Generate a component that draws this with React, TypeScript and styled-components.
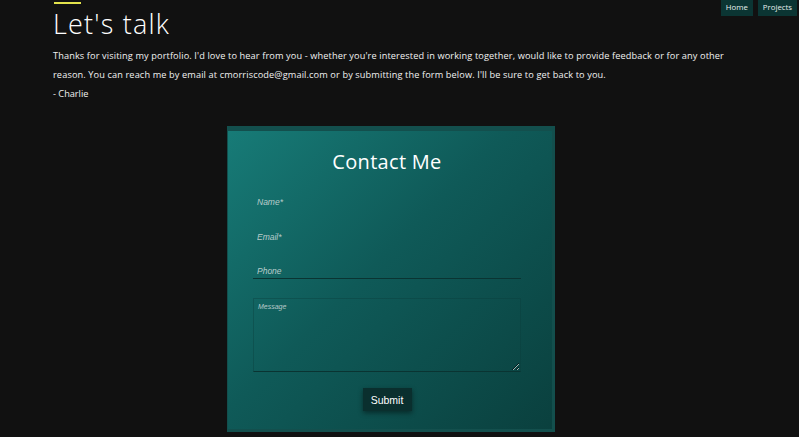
import React from "react";
import styled, { createGlobalStyle } from "styled-components";

const Global = createGlobalStyle`
  html, body { margin: 0; padding: 0; background: #111111; }
  body { font-family: "Open Sans", "Noto Sans", sans-serif; color: #ffffff; overflow: hidden; }
  * { box-sizing: border-box; }
`;

const Page = styled.div`
  position: relative;
  width: 799px;
  height: 437px;
  overflow: hidden;
  background: #111111;
`;

const Nav = styled.nav`
  position: absolute;
  top: 0;
  right: 2px;
  display: flex;
  gap: 5px;
`;

const NavButton = styled.a`
  display: block;
  height: 16px;
  padding: 0 5px;
  background: #0b3533;
  color: #e6f0ef;
  font-family: "Open Sans", sans-serif;
  font-size: 7.8px;
  line-height: 15px;
  text-decoration: none;
`;

const Intro = styled.section`
  padding: 2px 0 0 53px;
`;

const Accent = styled.div`
  width: 27px;
  height: 2px;
  margin-left: 1px;
  background: #e2e24c;
`;

const Title = styled.h1`
  margin: 2px 0 0 0;
  font-family: "Open Sans", sans-serif;
  font-weight: 300;
  font-size: 27px;
  line-height: 36px;
  letter-spacing: 1.2px;
`;

const Text = styled.p`
  margin: 5px 0 0 0;
  width: 678px;
  font-size: 9.2px;
  line-height: 18.5px;
  letter-spacing: 0.12px;
  color: #f2f2f2;
`;

const Signature = styled.p`
  margin: 0;
  font-size: 9.2px;
  line-height: 19px;
  color: #f2f2f2;
`;

const CardArea = styled.div`
  display: flex;
  padding: 23px 0 0 227px;
`;

const CardFrame = styled.div`
  width: 328px;
  height: 306px;
  padding: 5px 3px 3px 1px;
  background: #134f4d;
`;

const Card = styled.form`
  height: 100%;
  display: flex;
  flex-direction: column;
  align-items: center;
  padding: 0 31px 0 25px;
  background: linear-gradient(135deg, #177b77 0%, #0f5a58 45%, #0a403e 100%);
`;

const CardTitle = styled.h2`
  margin: 18px 0 0 0;
  font-family: "Open Sans", sans-serif;
  font-weight: 400;
  font-size: 20px;
  line-height: 26px;
  letter-spacing: 0.3px;
  color: #ffffff;
`;

const Field = styled.input<{ $line?: boolean }>`
  display: block;
  width: 268px;
  height: 16px;
  margin-top: ${(p) => (p.$line ? "18px" : "19px")};
  padding: 0 4px;
  background: transparent;
  border: none;
  border-bottom: 1px solid ${(p) => (p.$line ? "#0a3432" : "transparent")};
  color: #fff;
  font-family: "Liberation Sans", Arial, sans-serif;
  font-size: 8.5px;
  font-style: italic;
  outline: none;
  &::placeholder { color: #b9cccb; font-style: italic; }
`;

const FirstField = styled(Field)`
  margin-top: 19px;
`;

const Message = styled.textarea`
  display: block;
  width: 268px;
  height: 74px;
  margin-top: 19px;
  padding: 4px 4px;
  background: transparent;
  border: 1px solid rgba(10, 60, 58, 0.35);
  border-bottom: 1px solid #0a3432;
  color: #fff;
  font-family: "Liberation Sans", Arial, sans-serif;
  font-size: 7px;
  font-style: italic;
  outline: none;
  resize: vertical;
  &::placeholder { color: #b5c9c8; }
`;

const Submit = styled.button`
  margin-top: 16px;
  width: 49px;
  height: 23px;
  border: none;
  background: #0a2f2e;
  color: #ffffff;
  font-family: "Liberation Sans", Arial, sans-serif;
  font-size: 10.5px;
  box-shadow: 0 2px 5px rgba(0, 0, 0, 0.45);
  cursor: pointer;
`;

export default function App() {
  return (
    <Page>
      <Global />
      <Nav>
        <NavButton href="#">Home</NavButton>
        <NavButton href="#">Projects</NavButton>
      </Nav>
      <Intro>
        <Accent />
        <Title>Let's talk</Title>
        <Text>
          Thanks for visiting my portfolio. I'd love to hear from you - whether you're interested in working together, would like to provide feedback or for any other reason. You can reach me by email at cmorriscode@gmail.com or by submitting the form below. I'll be sure to get back to you.
        </Text>
        <Signature>- Charlie</Signature>
      </Intro>
      <CardArea>
        <CardFrame>
          <Card onSubmit={(e) => e.preventDefault()}>
            <CardTitle>Contact Me</CardTitle>
            <FirstField placeholder="Name*" />
            <Field placeholder="Email*" />
            <Field $line placeholder="Phone" />
            <Message placeholder="Message" />
            <Submit type="submit">Submit</Submit>
          </Card>
        </CardFrame>
      </CardArea>
    </Page>
  );
}
